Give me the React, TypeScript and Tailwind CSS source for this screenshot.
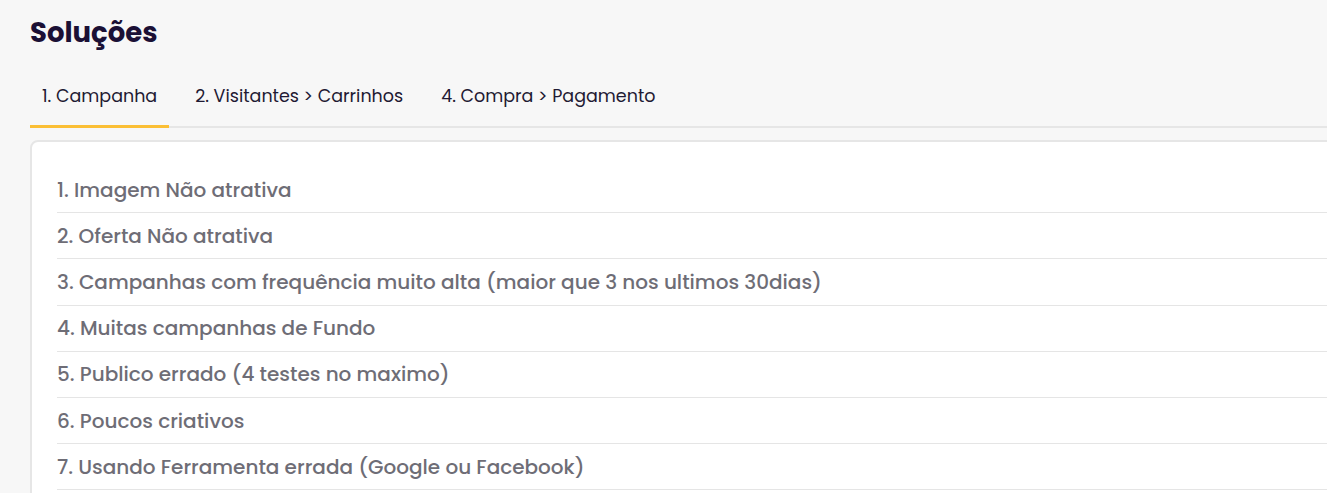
import React from 'react';

const tabs = ['1. Campanha', '2. Visitantes > Carrinhos', '4. Compra > Pagamento'];

const items = [
  '1. Imagem Não atrativa',
  '2. Oferta Não atrativa',
  '3. Campanhas com frequência muito alta (maior que 3 nos ultimos 30dias)',
  '4. Muitas campanhas de Fundo',
  '5. Publico errado (4 testes no maximo)',
  '6. Poucos criativos',
  '7. Usando Ferramenta errada (Google ou Facebook)',
];

const App: React.FC = () => {
  return (
    <div className="h-[493px] overflow-hidden bg-[#f7f7f7] pl-[30px] pt-[14px] font-['Poppins','DejaVu_Sans',sans-serif]">
      {/* Título */}
      <h1 className="text-[27.5px] font-bold leading-[38px] text-[#1b1035]">Soluções</h1>

      {/* Abas */}
      <div className="mt-[31px] flex gap-[14px] border-b-2 border-[#e6e6e6]">
        {tabs.map((t, i) => (
          <div
            key={t}
            className={
              i === 0
                ? '-mb-[2px] border-b-[3px] border-[#fbbf35] px-3 pb-[16px] text-[17.5px] leading-[26px] text-[#1f1a33]'
                : 'px-3 pb-[17px] text-[17.5px] leading-[26px] text-[#1f1a33]'
            }
          >
            {t}
          </div>
        ))}
      </div>

      {/* Cartão */}
      <div className="mt-[12px] h-[400px] w-[1320px] rounded-tl-lg border-2 border-[#e6e6e6] bg-white pl-[25px] pt-[25px]">
        {items.map((it) => (
          <div
            key={it}
            className="flex h-[46.2px] items-center border-b border-[#e5e5e5] text-[20px] font-medium text-[#6e6d76]"
          >
            {it}
          </div>
        ))}
      </div>
    </div>
  );
};

export default App;
